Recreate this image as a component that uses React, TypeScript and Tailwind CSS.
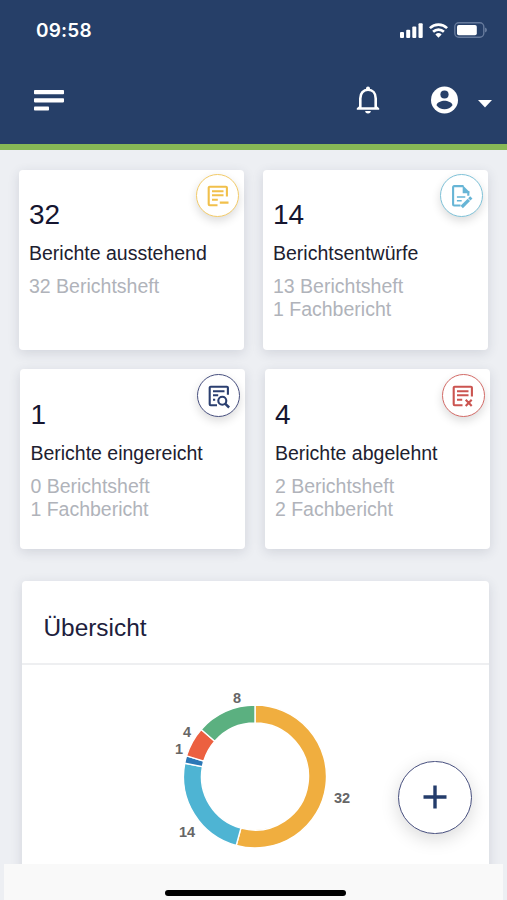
import type { ReactNode } from "react";

const FRAME = "M20.4 11.5V2.8a1 1 0 0 0-1-1H3.2a1 1 0 0 0-1 1v16.4a1 1 0 0 0 1 1h7.8";

const icons: Record<string, ReactNode> = {
  pending: <path d={`${FRAME}M5.5 6.2H17M5.5 10.2H17M5.5 14.8h5.8M13.3 17.6H22`} />,
  draft: (
    <>
      <path d="M13 1.1H3.6a1 1 0 0 0-1 1v17.4a1 1 0 0 0 1 1H10M17.8 6v4.8" />
      <path d="M12.2.2 18.8 6.8v1.4h-6.6z" fill="currentColor" stroke="none" />
      <path d="M6.4 12h8.4M6.4 15.8h4.8" strokeWidth="1.6" />
      <path d="m11.2 22 7.2-7.200" strokeWidth="3.3" />
      <path d="m18.8 14.4 2-2" strokeWidth="3.3" />
    </>
  ),
  submitted: (
    <>
      <path d="M20.4 9.8V2.8a1 1 0 0 0-1-1H3.2a1 1 0 0 0-1 1v16.4a1 1 0 0 0 1 1h6.3M5.5 6.2H17M5.5 10.2h5.2M5.5 14.8h2.2" />
      <circle cx="14.8" cy="15.8" r="4" />
      <path d="m17.6 18.6 4 3.9" strokeWidth="2.5" />
    </>
  ),
  rejected: <path d={`${FRAME}M5.5 6.2H17M5.5 10.2H17M5.5 14.8h5.2M14.2 14.8l6 6.2M20.2 14.8l-6 6.2`} />,
};

const cards = [
  { icon: "pending", color: "border-[#f3cb69] text-[#f1c04b]", count: 32, title: "Berichte ausstehend", lines: ["32 Berichtsheft"] },
  { icon: "draft", color: "border-[#7fc2d8] text-[#67b5d6]", count: 14, title: "Berichtsentwürfe", lines: ["13 Berichtsheft", "1 Fachbericht"] },
  { icon: "submitted", color: "border-[#48507f] text-[#2b3f70]", count: 1, title: "Berichte eingereicht", lines: ["0 Berichtsheft", "1 Fachbericht"] },
  { icon: "rejected", color: "border-[#d36b67] text-[#cb5450]", count: 4, title: "Berichte abgelehnt", lines: ["2 Berichtsheft", "2 Fachbericht"] },
];

type CardProps = (typeof cards)[number] & { className: string; badge: string };

function Card({ icon, color, count, title, lines, className, badge }: CardProps) {
  return (
    <div className={`relative h-[180px] w-[225px] rounded-[4px] bg-white pl-[10px] shadow-[0_3px_12px_rgba(40,50,80,0.14)] ${className}`}>
      <div className={`absolute right-[5px] flex size-[43px] items-center justify-center rounded-full border-[1.5px] bg-white shadow-[0_4px_10px_rgba(0,0,0,0.14)] ${badge} ${color}`}>
        <svg width="22" height="22" viewBox="0.5 0 22 22" fill="none" stroke="currentColor" strokeWidth="2.1" overflow="visible">
          {icons[icon]}
        </svg>
      </div>
      <div className="text-[28px] leading-[34px] text-[#15152f]">{count}</div>
      <div className="mt-[9px] whitespace-nowrap text-[19.5px] leading-[24px] text-[#20202f]">{title}</div>
      <div className="mt-[10px] text-[19.5px] leading-[23.3px] text-[#b0b3ba]">
        {lines.map((line) => (
          <div key={line}>{line}</div>
        ))}
      </div>
    </div>
  );
}

const slices = [
  { value: 32, color: "#f0ae3f", x: 342, y: 803 },
  { value: 14, color: "#4eb4d3", x: 187, y: 837 },
  { value: 1, color: "#2c78b7", x: 179, y: 754 },
  { value: 4, color: "#ec6040", x: 187, y: 737 },
  { value: 8, color: "#5bb080", x: 237, y: 703 },
];

function Donut() {
  const total = slices.reduce((sum, s) => sum + s.value, 0);
  const cx = 255;
  const cy = 776.5;
  const point = (r: number, a: number) => `${cx + r * Math.sin(a)} ${cy - r * Math.cos(a)}`;
  let angle = 0;
  return (
    <svg width="200" height="180" viewBox="160 680 200 180">
      {slices.map((s) => {
        const start = angle;
        angle += (s.value / total) * Math.PI * 2;
        const large = angle - start > Math.PI ? 1 : 0;
        return (
          <path
            key={s.value}
            d={`M${point(71.5, start)}A71.5 71.5 0 ${large} 1 ${point(71.5, angle)}L${point(53.5, angle)}A53.5 53.5 0 ${large} 0 ${point(53.5, start)}Z`}
            fill={s.color}
            stroke="#fff"
            strokeWidth="1.4"
          />
        );
      })}
      {slices.map((s) => (
        <text key={s.value} x={s.x} y={s.y} textAnchor="middle" className="fill-[#666] text-[14.5px] font-bold">
          {s.value}
        </text>
      ))}
    </svg>
  );
}

function Header() {
  return (
    <header className="h-[150px] border-b-[6px] border-[#87b956] bg-[#263f68] text-white">
      <div className="flex h-[60px] items-center justify-between pl-[36px] pr-[20.5px]">
        <span className="pt-[2px] font-['Inter',sans-serif] text-[19px] font-semibold tracking-[0.2px]">09:58</span>
        <div className="flex items-center gap-[6px]">
          <svg width="23" height="15" viewBox="0 0 23 15" fill="currentColor">
            <rect y="9" width="4" height="6" rx="1" />
            <rect x="6.2" y="6.8" width="4" height="8.2" rx="1" />
            <rect x="12.3" y="3.6" width="4" height="11.4" rx="1" />
            <rect x="18.5" y="0.2" width="4.2" height="14.8" rx="1" />
          </svg>
          <svg width="19" height="15" viewBox="0 0 19 15" fill="none" stroke="currentColor" strokeWidth="2.6">
            <path d="M.9 5.1a12.4 12.4 0 0 1 17.2 0M4.1 8.8a7.8 7.8 0 0 1 10.8 0" />
            <path d="M6.4 11.5a4.5 4.5 0 0 1 6.2 0l-3.1 3.2z" fill="currentColor" stroke="none" />
          </svg>
          <svg width="33" height="16" viewBox="0 0 33 16">
            <rect x=".8" y=".8" width="29" height="14.4" rx="4" fill="none" stroke="#667a9c" strokeWidth="1.4" />
            <rect x="3" y="2.9" width="19.8" height="10.3" rx="1.8" fill="#fff" />
            <path d="M31 5.5q2 .8 2 2.5t-2 2.5z" fill="#667a9c" />
          </svg>
        </div>
      </div>
      <div className="flex h-[80px] items-center pl-[34px] pr-[15px]">
        <svg width="30" height="21" viewBox="0 0 30 21" fill="currentColor" className="mr-auto">
          <rect width="30" height="4.2" rx="0.8" />
          <rect y="8.2" width="30" height="4.2" rx="0.8" />
          <rect y="16.4" width="15" height="4.2" rx="0.8" />
        </svg>
        <svg width="24" height="28" viewBox="0 0 24 28" className="mr-[51px]">
          <path d="M4.3 22V12.4C4.3 7.1 7.4 3.8 12 3.8s7.7 3.3 7.7 8.6V22" fill="none" stroke="currentColor" strokeWidth="2.6" />
          <path d="M10 4.4V2.5a2 2 0 0 1 4 0v1.9zM4 19.5l-3.2 2.7v1.6h22.4v-1.6L20 19.5v1.7H4zM9.2 25h5.6a2.8 2.4 0 0 1-5.6 0z" fill="currentColor" />
        </svg>
        <svg width="28" height="28" viewBox="0 0 28 28" className="mr-[19px]">
          <circle cx="13.5" cy="14" r="13.5" fill="currentColor" />
          <circle cx="13.5" cy="8.5" r="4.1" fill="#263f68" />
          <path d="M5.5 19.3c.3-3 5-4.5 8-4.5s7.7 1.5 8 4.5c-1.8 2.5-4.7 4-8 4s-6.2-1.5-8-4z" fill="#263f68" />
        </svg>
        <svg width="14" height="8" viewBox="0 0 14 8" fill="currentColor" className="mt-[7px]">
          <path d="M0 0h14L7 7.5z" />
        </svg>
      </div>
    </header>
  );
}

export default function App() {
  return (
    <div className="relative flex h-[900px] w-[507px] flex-col overflow-hidden bg-[#edeff3] font-['Liberation_Sans',Arial,sans-serif]">
      <Header />
      <main className="min-h-0 flex-1 overflow-hidden pt-[20px]">
        <div className="flex gap-[19px] pl-[19px]">
          {cards.slice(0, 2).map((card) => (
            <Card key={card.title} {...card} className="pt-[28px]" badge="top-[4px]" />
          ))}
        </div>
        <div className="mt-[19px] flex gap-[19.5px] pl-[20.4px]">
          {cards.slice(2).map((card) => (
            <Card key={card.title} {...card} className="pt-[29px]" badge="top-[5px]" />
          ))}
        </div>
        <section className="ml-[21.5px] mt-[32px] h-[320px] w-[467.5px] rounded-[4px] bg-white shadow-[0_3px_12px_rgba(40,50,80,0.14)]">
          <h2 className="h-[84px] border-b-2 border-[#eeeff1] pl-[22px] pt-[32px] text-[24.4px] leading-[30px] text-[#20203c]">Übersicht</h2>
          <div className="flex pl-[138.5px] pt-[15px]">
            <Donut />
          </div>
        </section>
      </main>
      <footer className="relative mx-[4px] flex h-[36px] shrink-0 justify-center bg-[#f9f9f9] pl-[4px] pt-[26px]">
        <div className="h-[6px] w-[181px] rounded-full bg-black" />
      </footer>
      <button className="absolute left-[398px] top-[760.5px] flex size-[73.5px] items-center justify-center rounded-full border-[1.5px] border-[#48507f] bg-white text-[#243c6b] shadow-[0_5px_18px_rgba(0,0,0,0.15)]" aria-label="Neu">
        <svg width="24" height="24" viewBox="0 0 24 24" stroke="currentColor" strokeWidth="3.4">
          <path d="M12 .5v23M.5 12h23" />
        </svg>
      </button>
    </div>
  );
}
